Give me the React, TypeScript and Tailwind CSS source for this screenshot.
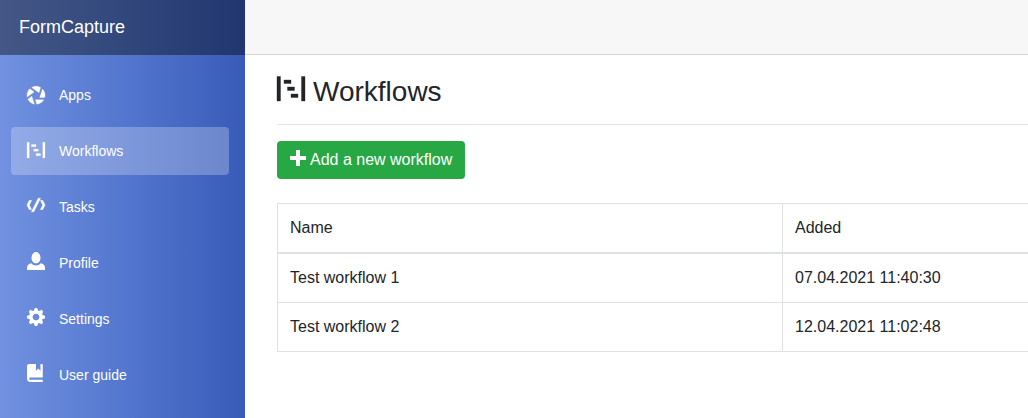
import type { ReactNode } from 'react';

type IconProps = { className?: string; children: ReactNode };

function Icon({ className = '', children }: IconProps) {
  return (
    <svg
      viewBox="0 0 8 8"
      fill="currentColor"
      aria-hidden="true"
      className={`shrink-0 overflow-visible ${className}`}
    >
      {children}
    </svg>
  );
}

const aperture = (
  <path
    transform="translate(0 1)"
    stroke="currentColor"
    strokeWidth="0.15"
    d="M4 0c-.69 0-1.34.19-1.91.5l3.22 2.34.75-2.25c-.6-.36-1.31-.59-2.06-.59zm-2.75 1.13c-.76.73-1.25 1.74-1.25 2.88 0 .25.02.48.06.72l3.09-2.22-1.91-1.38zm5.63.13l-1.22 3.75h2.19c.08-.32.16-.65.16-1 0-1.07-.44-2.03-1.13-2.75zm-4.72 3.22l-1.75 1.25c.55 1.13 1.6 1.99 2.88 2.22l-1.13-3.47zm1.56 1.53l.63 1.97c1.33-.12 2.46-.88 3.09-1.97h-3.72z"
  />
);
const project = (
  <path
    transform="translate(0 1)"
    stroke="currentColor"
    strokeWidth="0.1"
    d="M0 0v7h1v-7h-1zm7 0v7h1v-7h-1zm-5 1v1h2v-1h-2zm1 2v1h2v-1h-2zm1 2v1h2v-1h-2z"
  />
);
const code = (
  <path
    stroke="currentColor"
    strokeWidth="0.25"
    d="M5 1l-3 6h1l3-6h-1zm-4 1l-1 2 1 2h1l-1-2 1-2h-1zm5 0l1 2-1 2h1l1-2-1-2h-1z"
  />
);
const person = (
  <path d="M4 0c-1.1 0-2 1.12-2 2.5s.9 2.5 2 2.5 2-1.12 2-2.5-.9-2.5-2-2.5zm-2.09 5c-1.06.05-1.91.92-1.91 2v1h8v-1c0-1.08-.84-1.95-1.91-2-.54.61-1.28 1-2.09 1-.81 0-1.55-.39-2.09-1z" />
);
const cog = (
  <path d="M3.5 0l-.5 1.19c-.1.03-.19.08-.28.13l-1.19-.5-.72.72.5 1.19c-.05.1-.09.18-.13.28l-1.19.5v1l1.19.5c.04.1.08.18.13.28l-.5 1.19.72.72 1.19-.5c.09.04.18.09.28.13l.5 1.19h1l.5-1.19c.09-.04.19-.08.28-.13l1.19.5.72-.72-.5-1.19c.04-.09.09-.19.13-.28l1.19-.5v-1l-1.19-.5c-.03-.09-.08-.19-.13-.28l.5-1.19-.72-.72-1.19.5c-.09-.04-.19-.09-.28-.13l-.5-1.19h-1zm.5 2.5c.83 0 1.5.67 1.5 1.5s-.67 1.5-1.5 1.5-1.5-.67-1.5-1.5.67-1.5 1.5-1.5z" />
);
const book = (
  <path d="M1 0c-.07 0-.13.01-.19.03-.39.08-.7.39-.78.78-.03.06-.03.12-.03.19v5.5c0 .83.67 1.5 1.5 1.5h5.5v-1h-5.5c-.28 0-.5-.22-.5-.5s.22-.5.5-.5h5.5v-5.5c0-.28-.22-.5-.5-.5h-.5v3l-1-1-1 1v-3h-3z" />
);
const plus = <path d="M3 0v3h-3v2h3v3h2v-3h3v-2h-3v-3h-2z" />;

const navItems = [
  { label: 'Apps', icon: aperture },
  { label: 'Workflows', icon: project, active: true },
  { label: 'Tasks', icon: code },
  { label: 'Profile', icon: person },
  { label: 'Settings', icon: cog },
  { label: 'User guide', icon: book },
];

const workflows = [
  { name: 'Test workflow 1', added: '07.04.2021 11:40:30' },
  { name: 'Test workflow 2', added: '12.04.2021 11:02:48' },
];

export default function App() {
  return (
    <div className="flex min-h-screen bg-white font-['Liberation_Sans',Arial,sans-serif] text-base text-[#212529]">
      <aside className="w-[245px] shrink-0 bg-linear-to-r from-[#7291e0] via-[#4f73cc] via-58% to-[#385bb8] text-white">
        <div className="flex h-[55px] items-center bg-black/40 px-[19px] pb-0.5">
          <a href="#home" className="text-lg">FormCapture</a>
        </div>
        <nav className="flex flex-col gap-2 pt-4 pr-4 pl-[11px]">
          {navItems.map(({ label, icon, active }) => (
            <a
              key={label}
              href={`#${label.toLowerCase().replace(' ', '-')}`}
              aria-current={active ? 'page' : undefined}
              className={`flex h-12 items-center gap-3.5 rounded px-4 text-sm ${active ? 'bg-white/25' : ''}`}
            >
              <Icon className="mb-1 size-[18px]">{icon}</Icon>
              {label}
            </a>
          ))}
        </nav>
      </aside>

      <div className="min-w-0 flex-1">
        <header className="h-[55px] border-b border-[#d6d5d5] bg-[#f7f7f7]" />
        <main className="overflow-hidden pt-[18px] pl-8">
          <h1 className="flex items-start gap-2 border-b border-[#e5e5e5] pb-3.5 text-[28px] leading-[37px]">
            <Icon className="size-7">{project}</Icon>
            Workflows
          </h1>
          <button
            type="button"
            className="mt-4 flex h-[38px] items-center gap-1 rounded bg-[#28a745] px-[13px] text-white"
          >
            <Icon className="mb-1 size-4">{plus}</Icon>
            Add a new workflow
          </button>
          <table className="mt-6 w-full table-fixed border-collapse border border-r-0 border-[#dee2e6] text-left">
            <thead>
              <tr className="border-b-2 border-[#dee2e6]">
                <th scope="col" className="w-[505px] border-r border-[#dee2e6] p-3 font-normal">Name</th>
                <th scope="col" className="p-3 font-normal">Added</th>
              </tr>
            </thead>
            <tbody>
              {workflows.map(({ name, added }) => (
                <tr key={name} className="border-b border-[#dee2e6]">
                  <td className="border-r border-[#dee2e6] p-3">{name}</td>
                  <td className="p-3">{added}</td>
                </tr>
              ))}
            </tbody>
          </table>
        </main>
      </div>
    </div>
  );
}
